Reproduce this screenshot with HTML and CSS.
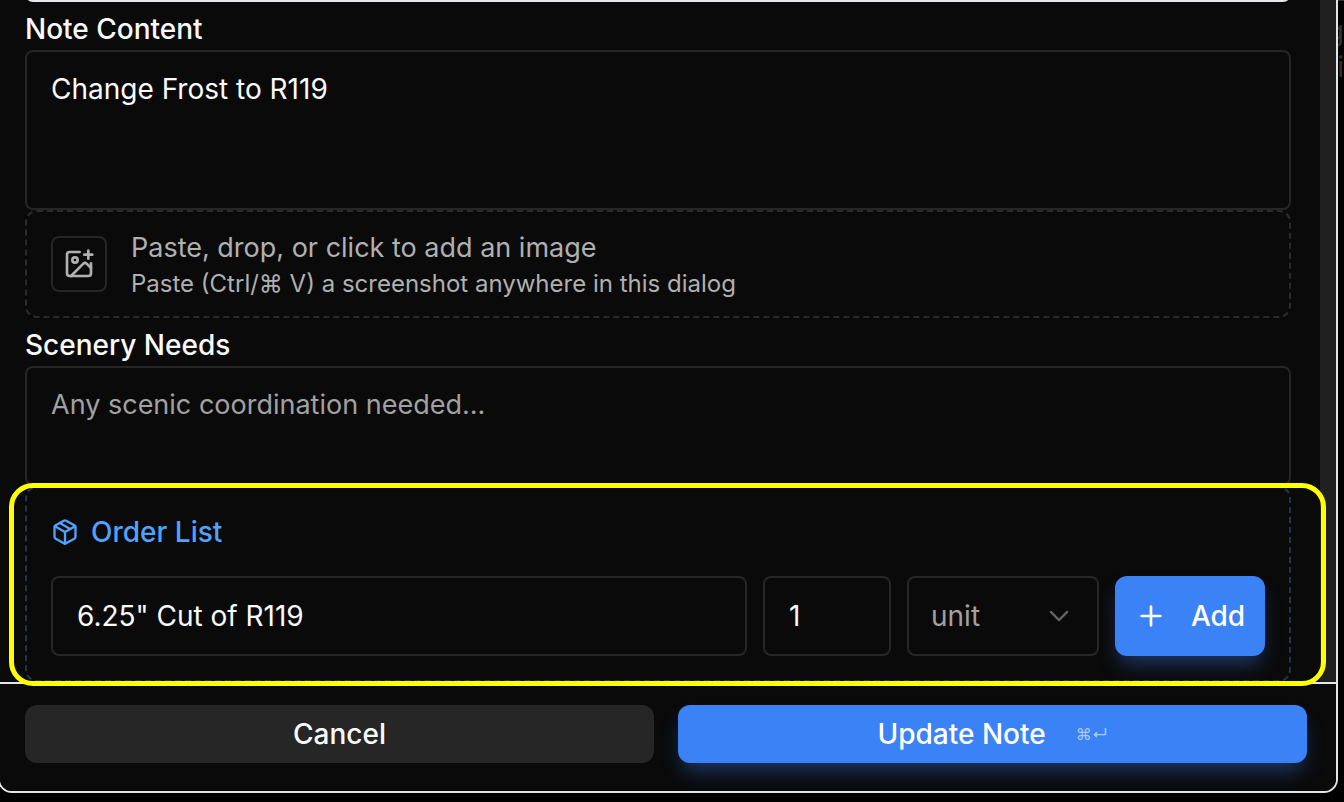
FILE: index.html
```html
<!DOCTYPE html>
<html lang="en">
<head>
<meta charset="utf-8">
<title>Edit Note</title>
<link rel="stylesheet" href="styles.css">
</head>
<body>
<div class="backdrop" aria-hidden="true"><span>g</span><span>ti</span></div>
<form class="dialog">
  <div class="scroll-area">
    <div class="content">
      <div class="previous-field"></div>

      <label class="label" for="note">Note Content</label>
      <textarea class="field note" id="note">Change Frost to R119</textarea>

      <button class="dropzone" type="button">
        <span class="thumb">
          <svg class="icon" viewBox="0 0 24 24"><path d="M16 5h6"/><path d="M19 2v6"/><path d="M21 11.5V19a2 2 0 0 1-2 2H5a2 2 0 0 1-2-2V5a2 2 0 0 1 2-2h7.5"/><path d="m21 15-3.086-3.086a2 2 0 0 0-2.828 0L6 21"/><circle cx="9" cy="9" r="2"/></svg>
        </span>
        <span class="drop-text">
          <span class="drop-title">Paste, drop, or click to add an image</span>
          <span class="drop-hint">Paste (Ctrl/⌘ V) a screenshot anywhere in this dialog</span>
        </span>
      </button>

      <label class="label" for="scenery">Scenery Needs</label>
      <textarea class="field scenery" id="scenery" placeholder="Any scenic coordination needed..."></textarea>

      <section class="order">
        <h2 class="order-title">
          <svg class="icon" viewBox="0 0 24 24"><path d="M11 21.73a2 2 0 0 0 2 0l7-4A2 2 0 0 0 21 16V8a2 2 0 0 0-1-1.73l-7-4a2 2 0 0 0-2 0l-7 4A2 2 0 0 0 3 8v8a2 2 0 0 0 1 1.73z"/><path d="M12 22V12"/><path d="M3.3 7 12 12l8.700-5"/><path d="m7.500 4.270 9 5.150"/></svg>
          Order List
        </h2>
        <div class="order-row">
          <input class="field" type="text" aria-label="Item" value="6.25&quot; Cut of R119">
          <input class="field" type="text" inputmode="numeric" aria-label="Quantity" value="1">
          <div class="select-wrap">
            <select class="field" aria-label="Unit"><option>unit</option></select>
            <svg class="icon chevron" viewBox="0 0 24 24"><path d="m5 8.500 7 7 7-7"/></svg>
          </div>
          <button class="button primary add" type="button">
            <svg class="icon" viewBox="0 0 24 24"><path d="M5 12h14M12 5v14"/></svg>
            Add
          </button>
        </div>
      </section>
    </div>
    <div class="scrollbar"></div>
  </div>

  <footer class="footer">
    <button class="button cancel" type="button">Cancel</button>
    <button class="button primary" type="submit">Update Note <kbd>⌘↵</kbd></button>
  </footer>
  <div class="highlight"></div>
</form>
</body>
</html>
```

FILE: styles.css
```css
* { box-sizing: border-box; }

body {
  margin: 0;
  min-height: 100vh;
  overflow: hidden;
  background: #000;
  color: #fafafa;
  font: 400 28px/40px Inter, "Noto Sans", sans-serif;
}

button, input, select, textarea { font: inherit; color: inherit; }

.backdrop {
  position: absolute;
  top: 0;
  right: 0;
  width: 48px;
  padding-top: 12px;
  border-top: 1px solid #333;
  color: #333;
  display: flex;
  flex-direction: column;
  align-items: flex-end;
  line-height: 36px;
}

.dialog {
  position: relative;
  margin: 0 6px 0 -2px;
  border: 2px solid #e5e5e5;
  border-top: 0;
  border-radius: 0 0 14px 14px;
  background: #0a0a0a;
}

.scroll-area { display: flex; }

.content {
  flex: 1;
  min-width: 0;
  padding: 0 29px 0 25px;
}

.scrollbar { width: 16px; background: #202020; }

.previous-field {
  height: 16px;
  margin-top: -14px;
  border: 2px solid #e5e7eb;
  border-radius: 8px;
}

.label {
  display: block;
  padding: 7px 0 1px;
  font-weight: 500;
}

.field {
  display: block;
  width: 100%;
  height: 80px;
  margin: 0;
  padding: 0 24px;
  border: 2px solid #262626;
  border-radius: 8px;
  background: transparent;
  outline: none;
  resize: none;
}

.field::placeholder { color: #a1a1a1; opacity: 1; }

.note { height: 160px; padding-top: 17px; }
.scenery { height: 120px; padding-top: 17px; font-size: 27px; }

.icon {
  width: 28px;
  height: 28px;
  flex: none;
  fill: none;
  stroke: currentColor;
  stroke-width: 2;
  stroke-linecap: round;
  stroke-linejoin: round;
}

.dropzone {
  display: flex;
  align-items: center;
  gap: 24px;
  width: 100%;
  height: 108px;
  padding: 0 24px;
  border: 2px dashed #2a2a2a;
  border-radius: 12px;
  background: transparent;
  color: #b0b0b0;
  text-align: left;
}

.thumb {
  display: grid;
  place-items: center;
  width: 56px;
  height: 56px;
  border: 2px solid #262626;
  border-radius: 8px;
}

.thumb .icon { width: 32px; height: 32px; }
.drop-text { display: grid; }
.drop-title { font-size: 27px; }
.drop-hint { font-size: 24px; line-height: 32px; }

.order {
  padding: 24px;
  border: 2px dashed #24324a;
  border-radius: 12px;
}

.order-title {
  display: flex;
  align-items: center;
  gap: 12px;
  margin: 0 0 24px;
  color: #50a2ff;
  font-size: 28px;
  font-weight: 500;
}

.order-row {
  display: grid;
  grid-template-columns: 1fr 128px 192px 150px;
  gap: 16px;
}

.select-wrap { position: relative; color: #a1a1a1; }
.select-wrap .field { appearance: none; padding: 0 22px; }

.chevron {
  position: absolute;
  top: 26px;
  right: 26px;
  color: #626262;
  pointer-events: none;
}

.button {
  display: flex;
  align-items: center;
  justify-content: center;
  height: 58px;
  padding: 0;
  border: 0;
  border-radius: 12px;
  font-weight: 500;
}

.primary {
  background: #3b82f6;
  color: #fff;
  box-shadow: 0 12px 20px -4px rgb(59 130 246 / 38%);
}

.add { height: 80px; gap: 24px; }
.add .icon { width: 32px; height: 32px; }
.cancel { background: #262626; }

.footer {
  display: grid;
  grid-template-columns: 1fr 1fr;
  gap: 24px;
  position: relative;
  padding: 21px 29px 28px 25px;
  border-top: 2px solid #e5e5e5;
  border-radius: 0 0 12px 12px;
  background: #0a0a0a;
  overflow: hidden;
}

.footer kbd {
  margin-left: 30px;
  color: #a9cbfb;
  font: 400 16px/28px Inter, "Noto Sans", sans-serif;
}

.highlight {
  position: absolute;
  top: 483px;
  right: 10px;
  bottom: 105px;
  left: 9px;
  border: 5px solid #ff0;
  border-radius: 24px;
  pointer-events: none;
}
```
